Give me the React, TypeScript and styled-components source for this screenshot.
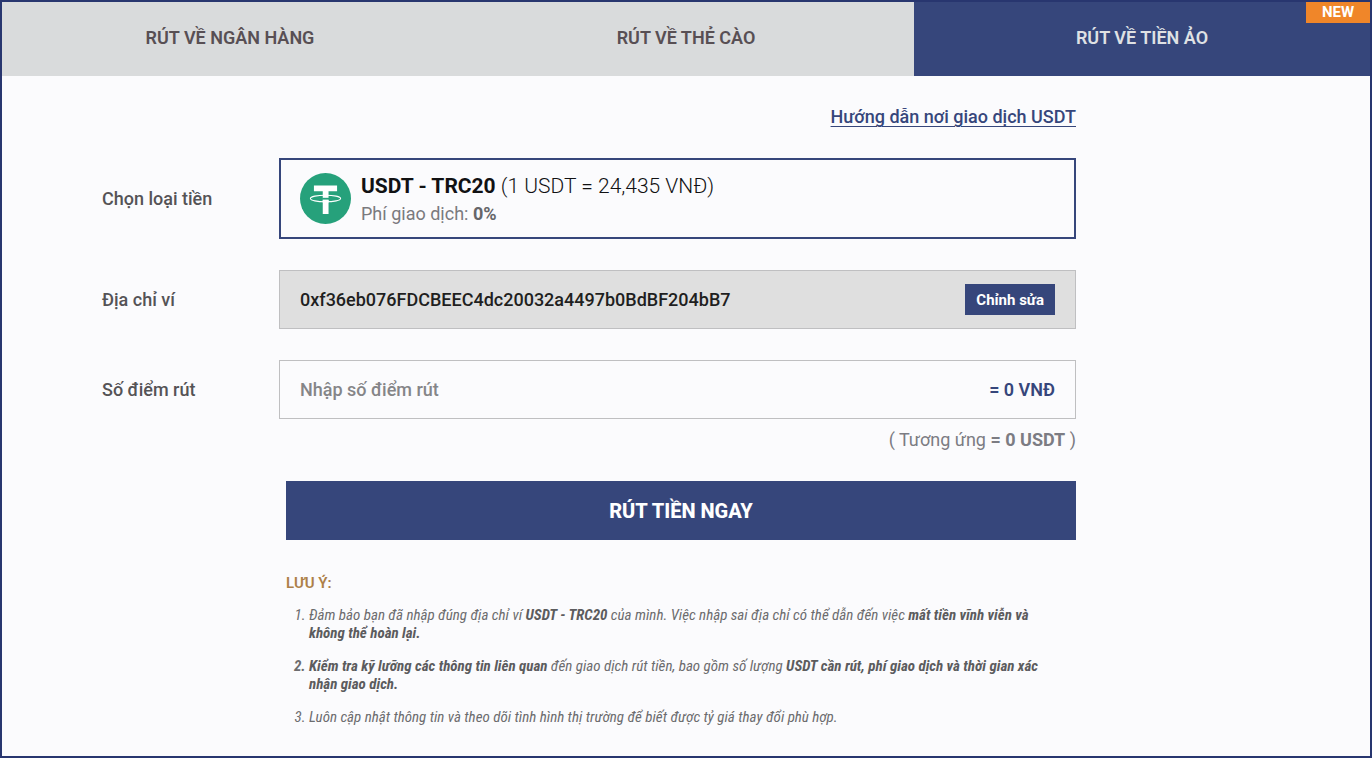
import React, { useState } from "react";
import styled, { createGlobalStyle, css } from "styled-components";

const navy = "#36467b";
const sans = `Roboto, "Noto Sans", "Liberation Sans", sans-serif`;
const condensed = `"Roboto Condensed", Roboto, "Noto Sans", sans-serif`;

const GlobalStyle = createGlobalStyle`
  *, *::before, *::after { box-sizing: border-box; }
  body {
    margin: 0;
    background: #fbfbfd;
    font-family: ${sans};
  }
  button, input { font-family: inherit; }
`;

const Page = styled.div`
  min-height: 100vh;
  border: 2px solid #28366f;
  background: #fbfbfd;
`;

const Tabs = styled.nav`
  display: grid;
  grid-template-columns: repeat(3, 1fr);
`;

const Tab = styled.button<{ $active?: boolean }>`
  position: relative;
  height: 74px;
  padding: 0 0 3px;
  border: 0;
  background: ${(p) => (p.$active ? navy : "#d9dbdc")};
  color: ${(p) => (p.$active ? "#dfe1e4" : "#584f54")};
  font-size: 18px;
  line-height: 24px;
  font-weight: 600;
  cursor: pointer;
`;

const NewBadge = styled.span`
  position: absolute;
  top: 0;
  right: 0;
  width: 64px;
  height: 21px;
  background: #f08629;
  color: #fff;
  font-size: 15px;
  line-height: 20px;
  font-weight: 700;
`;

const Form = styled.form`
  display: flex;
  flex-direction: column;
  max-width: 1074px;
  padding: 29px 0 28px 100px;
`;

const GuideLink = styled.a`
  align-self: flex-end;
  margin-bottom: 29px;
  color: ${navy};
  font-size: 18px;
  line-height: 24px;
  font-weight: 500;
  text-decoration: underline;
  text-decoration-thickness: 1px;
  text-underline-offset: 3px;
`;

const Row = styled.div`
  display: grid;
  grid-template-columns: 177px 1fr;
  align-items: center;
  margin-bottom: 31px;
`;

const AmountRow = styled(Row)`
  margin-bottom: 9px;
`;

const labelText = css`
  color: #555356;
  font-size: 18px;
  line-height: 24px;
  font-weight: 500;
`;

const Label = styled.label`
  ${labelText}
`;

const LabelText = styled.span`
  ${labelText}
`;

const Field = styled.div<{ $filled?: boolean }>`
  display: flex;
  align-items: center;
  height: 59px;
  padding: 0 20px;
  border: 1px solid #bfbfc1;
  background: ${(p) => (p.$filled ? "#dfdfdf" : "transparent")};
`;

const CoinButton = styled.button`
  display: flex;
  align-items: center;
  gap: 10px;
  height: 81px;
  padding: 0 19px;
  border: 2px solid ${navy};
  background: transparent;
  text-align: left;
  cursor: pointer;
`;

const CoinText = styled.span`
  display: flex;
  flex-direction: column;
  padding-top: 2px;
`;

const CoinName = styled.span`
  color: #111113;
  font-size: 21px;
  line-height: 28px;
  font-weight: 300;
  b {
    font-weight: 700;
  }
`;

const CoinFee = styled.span`
  color: #7a7a7e;
  font-size: 18px;
  line-height: 28px;
  font-weight: 400;
  b {
    color: #66666a;
  }
`;

const Input = styled.input`
  flex: 1;
  min-width: 0;
  height: 100%;
  padding: 0;
  border: 0;
  outline: 0;
  background: transparent;
  color: #1f1f21;
  font-size: 18px;
  font-weight: 500;
  &::placeholder {
    color: #858588;
    opacity: 1;
  }
`;

const EditButton = styled.button`
  height: 31px;
  padding: 0 11px;
  border: 0;
  background: ${navy};
  color: #fff;
  font-size: 15px;
  font-weight: 700;
  cursor: pointer;
`;

const Converted = styled.output`
  color: ${navy};
  font-size: 18px;
  font-weight: 600;
`;

const Hint = styled.p`
  align-self: flex-end;
  margin: 0 0 29px;
  color: #7c7c83;
  font-size: 18px;
  line-height: 24px;
`;

const Submit = styled.button`
  height: 59px;
  margin-left: 184px;
  border: 0;
  background: ${navy};
  color: #fff;
  font-size: 20px;
  font-weight: 800;
  cursor: pointer;
`;

const Notes = styled.section`
  margin: 33px 0 0 184px;
`;

const NotesTitle = styled.h2`
  margin: 0 0 13px;
  color: #ad8048;
  font-size: 15px;
  line-height: 20px;
  font-weight: 600;
`;

const NoteList = styled.ol`
  display: flex;
  flex-direction: column;
  gap: 15px;
  margin: 0;
  padding: 0 16px 0 23px;
  font-family: ${condensed};
  font-size: 15px;
  line-height: 18px;
  font-style: italic;
  color: #6c6c6e;
`;

const Note = styled.li<{ $strongMarker?: boolean }>`
  &::marker {
    font-weight: ${(p) => (p.$strongMarker ? 700 : 400)};
  }
  b {
    color: #5c5c5e;
  }
`;

const TetherIcon = () => (
  <svg width="51" height="51" viewBox="0 0 52 52" aria-hidden="true">
    <circle cx="26" cy="26" r="26" fill="#26a17b" />
    <path d="M14.2 12.8h23.6v5.8h-8.7v23.2h-5.9V18.6h-9z" fill="#fff" />
    <path d="M22.6 25.3h7v2.1h-7z" fill="#26a17b" />
    <ellipse cx="26" cy="26" rx="15.4" ry="3.4" fill="none" stroke="#fff" strokeWidth="1.1" />
    <path d="M23.2 27.2h5.9v3h-5.9z" fill="#fff" />
  </svg>
);

const tabs = ["RÚT VỀ NGÂN HÀNG", "RÚT VỀ THẺ CÀO", "RÚT VỀ TIỀN ẢO"];

export default function App() {
  const [active, setActive] = useState(2);
  const [points, setPoints] = useState("");

  return (
    <Page>
      <GlobalStyle />
      <Tabs>
        {tabs.map((name, i) => (
          <Tab key={name} type="button" $active={i === active} onClick={() => setActive(i)}>
            {name}
            {i === 2 && <NewBadge>NEW</NewBadge>}
          </Tab>
        ))}
      </Tabs>

      <Form onSubmit={(e) => e.preventDefault()}>
        <GuideLink href="#guide">Hướng dẫn nơi giao dịch USDT</GuideLink>

        <Row>
          <LabelText id="coin-label">Chọn loại tiền</LabelText>
          <CoinButton type="button" aria-describedby="coin-label">
            <TetherIcon />
            <CoinText>
              <CoinName>
                <b>USDT - TRC20</b> (1 USDT = 24,435 VNĐ)
              </CoinName>
              <CoinFee>
                Phí giao dịch: <b>0%</b>
              </CoinFee>
            </CoinText>
          </CoinButton>
        </Row>

        <Row>
          <Label htmlFor="wallet">Địa chỉ ví</Label>
          <Field $filled>
            <Input id="wallet" readOnly value="0xf36eb076FDCBEEC4dc20032a4497b0BdBF204bB7" />
            <EditButton type="button">Chỉnh sửa</EditButton>
          </Field>
        </Row>

        <AmountRow>
          <Label htmlFor="points">Số điểm rút</Label>
          <Field>
            <Input
              id="points"
              placeholder="Nhập số điểm rút"
              value={points}
              onChange={(e) => setPoints(e.target.value)}
            />
            <Converted htmlFor="points">= 0 VNĐ</Converted>
          </Field>
        </AmountRow>
        <Hint>
          ( Tương ứng <b>= 0 USDT</b> )
        </Hint>

        <Submit type="submit">RÚT TIỀN NGAY</Submit>

        <Notes>
          <NotesTitle>LƯU Ý:</NotesTitle>
          <NoteList>
            <Note>
              Đảm bảo bạn đã nhập đúng địa chỉ ví <b>USDT - TRC20</b> của mình. Việc nhập sai địa chỉ có thể dẫn đến
              việc <b>mất tiền vĩnh viễn và không thể hoàn lại.</b>
            </Note>
            <Note $strongMarker>
              <b>Kiểm tra kỹ lưỡng các thông tin liên quan</b> đến giao dịch rút tiền, bao gồm số lượng{" "}
              <b>USDT cần rút, phí giao dịch và thời gian xác nhận giao dịch.</b>
            </Note>
            <Note>Luôn cập nhật thông tin và theo dõi tình hình thị trường để biết được tỷ giá thay đổi phù hợp.</Note>
          </NoteList>
        </Notes>
      </Form>
    </Page>
  );
}
